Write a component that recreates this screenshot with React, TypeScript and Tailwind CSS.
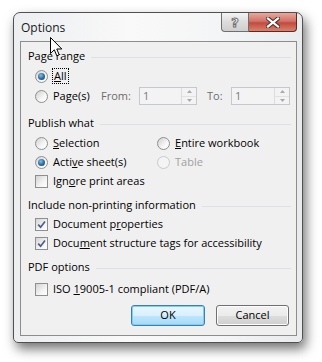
import React from 'react';

const Radio = ({ checked = false, disabled = false }: { checked?: boolean; disabled?: boolean }) => (
  <span
    className={`w-[13px] h-[13px] shrink-0 rounded-full border flex items-center justify-center ${
      disabled
        ? 'border-[#c9c9c9] bg-[#f4f4f4]'
        : 'border-[#8e8f8f] bg-[linear-gradient(135deg,#cfcfcf,#f6f6f6_60%,#ffffff)]'
    }`}
  >
    {checked && (
      <span className="w-[7px] h-[7px] rounded-full bg-[radial-gradient(circle_at_40%_35%,#7ec0ea,#2a6a9c_55%,#173f63)]" />
    )}
  </span>
);

const Check = ({ checked = false }: { checked?: boolean }) => (
  <span className="w-[13px] h-[13px] shrink-0 border border-[#8e8f8f] bg-[linear-gradient(135deg,#d3d3d3,#f4f4f4_60%,#ffffff)] flex items-center justify-center">
    {checked && (
      <svg width="9" height="9" viewBox="0 0 9 9">
        <path d="M1.2 4.6 L3.6 7.2 L8 1.4" stroke="#4d5f8c" strokeWidth="1.7" fill="none" />
      </svg>
    )}
  </span>
);

const Heading = ({ children }: { children: React.ReactNode }) => (
  <div className="flex items-center h-[20px] pl-[7px] pr-[5px]">
    <span>{children}</span>
    <div className="flex-1 h-px bg-[#dde0e4] ml-[6px] mt-[2px]" />
  </div>
);

const Spin = ({ value }: { value: string }) => (
  <div className="flex h-[18px] border border-[#c5c8cc] bg-[#f3f3f3] w-full">
    <span className="flex-1 pl-[3px] leading-[16px] text-[#7a7a7a]">{value}</span>
    <div className="w-[15px] flex flex-col border-l border-[#dcdcdc]">
      <div className="flex-1 flex items-center justify-center border-b border-[#e2e2e2]">
        <svg width="5" height="3" viewBox="0 0 5 3"><path d="M0 3 L2.5 0 L5 3 Z" fill="#a9a9a9" /></svg>
      </div>
      <div className="flex-1 flex items-center justify-center">
        <svg width="5" height="3" viewBox="0 0 5 3"><path d="M0 0 L2.5 3 L5 0 Z" fill="#a9a9a9" /></svg>
      </div>
    </div>
  </div>
);

export default function App() {
  return (
    <div className="w-[322px] h-[362px] bg-white pt-[12px] pl-[13px] font-['Open_Sans',sans-serif] text-[11px] text-black">
      <div className="relative w-[290px] h-[331px] rounded-t-[7px] rounded-b-[5px] border border-[#505050] bg-[linear-gradient(90deg,#eceef0,#f9f9f9_40%,#f4f5f6_70%,#e9ebed)] shadow-[3px_6px_12px_rgba(0,0,0,0.55)] flex flex-col">
        {/* title bar */}
        <div className="h-[28px] flex items-start justify-between">
          <span className="pl-[7px] pt-[6px] text-[12px] text-[#1a1a1a]">Options</span>
          <div className="flex mr-[5px]">
            <div className="w-[28px] h-[19px] border border-t-0 border-[#6f6f6f] rounded-bl-[4px] bg-[linear-gradient(#f4f4f4,#dcdcdc_50%,#cfcfcf)] flex items-center justify-center">
              <span className="font-['DejaVu_Sans',sans-serif] font-bold text-[13px] leading-none text-white [-webkit-text-stroke:1px_#6e6e6e]">?</span>
            </div>
            <div className="w-[48px] h-[19px] border border-t-0 border-l-0 border-[#5a2a25] rounded-br-[4px] bg-[linear-gradient(#e8a89a,#d2736a_45%,#c24a3c_55%,#d9826f)] flex items-center justify-center">
              <svg width="14" height="11" viewBox="0 0 14 11">
                <path d="M2 1.5 L12 9.5 M12 1.5 L2 9.5" stroke="#4a3430" strokeWidth="4.2" strokeLinecap="square" />
                <path d="M2 1.5 L12 9.5 M12 1.5 L2 9.5" stroke="#ffffff" strokeWidth="2.2" strokeLinecap="square" />
              </svg>
            </div>
          </div>
        </div>

        {/* client area */}
        <div className="ml-[6px] w-[277px] h-[295px] border border-[#8d8d8d] bg-[#f0f0f0] flex flex-col pt-[4px]">
          <Heading>Page range</Heading>
          <div className="flex items-center h-[20px] pl-[14px] gap-[4px]">
            <Radio checked />
            <span className="border border-dotted border-black px-px leading-[14px]">
              <u>A</u>ll
            </span>
          </div>
          <div className="flex items-center h-[20px] pl-[14px]">
            <div className="w-[66px] flex items-center gap-[5px]">
              <Radio />
              <span>Pa<u>g</u>e(s)</span>
            </div>
            <span className="w-[38px] text-[#6d6d6d]">From:</span>
            <div className="w-[58px]"><Spin value="1" /></div>
            <span className="w-[24px] ml-[10px] text-[#6d6d6d]">To:</span>
            <div className="w-[59px]"><Spin value="1" /></div>
          </div>

          <div className="mt-[7px]">
            <Heading>Publish what</Heading>
          </div>
          <div className="flex flex-col pl-[14px] mt-px">
            <div className="flex h-[19px] items-center">
              <div className="w-[122px] flex items-center gap-[5px]">
                <Radio />
                <span><u>S</u>election</span>
              </div>
              <div className="flex items-center gap-[5px]">
                <Radio />
                <span><u>E</u>ntire workbook</span>
              </div>
            </div>
            <div className="flex h-[19px] items-center">
              <div className="w-[122px] flex items-center gap-[5px]">
                <Radio checked />
                <span>Acti<u>v</u>e sheet(s)</span>
              </div>
              <div className="flex items-center gap-[5px]">
                <Radio disabled />
                <span className="text-[#a0a0a0]">Table</span>
              </div>
            </div>
            <div className="flex h-[19px] items-center gap-[5px]">
              <Check />
              <span>Ign<u>o</u>re print areas</span>
            </div>
          </div>

          <div className="mt-[4px]">
            <Heading>Include non-printing information</Heading>
          </div>
          <div className="flex flex-col pl-[14px]">
            <div className="flex h-[19px] items-center gap-[5px]">
              <Check checked />
              <span>Document p<u>r</u>operties</span>
            </div>
            <div className="flex h-[19px] items-center gap-[5px]">
              <Check checked />
              <span>Docu<u>m</u>ent structure tags for accessibility</span>
            </div>
          </div>

          <div className="mt-[4px]">
            <Heading>PDF options</Heading>
          </div>
          <div className="flex h-[19px] items-center gap-[5px] pl-[14px] mt-[3px]">
            <Check />
            <span>ISO <u>1</u>9005-1 compliant (PDF/A)</span>
          </div>

          <div className="flex justify-end gap-[11px] pr-[7px] mt-[6px]">
            <button className="w-[74px] h-[21px] rounded-[3px] border border-[#3c7fb1] bg-[linear-gradient(#eaf6fd,#d9f0fc_50%,#bee6fd_51%,#a7d9f5)] shadow-[inset_0_0_0_1px_#7ad0f5]">
              OK
            </button>
            <button className="w-[73px] h-[21px] rounded-[3px] border border-[#707070] bg-[linear-gradient(#f2f2f2,#ebebeb_50%,#dddddd_51%,#cfcfcf)] shadow-[inset_0_0_0_1px_#fcfcfc]">
              Cancel
            </button>
          </div>
        </div>

        {/* mouse pointer */}
        <svg className="absolute left-[36px] top-[24px]" width="13" height="20" viewBox="0 0 13 20">
          <path d="M0.5 0.5 L0.5 16.5 L4.3 12.8 L6.8 18.8 L9.2 17.8 L6.8 12 L11.8 12 Z" fill="#fff" stroke="#000" strokeWidth="1" strokeLinejoin="round" />
        </svg>
      </div>
    </div>
  );
}
